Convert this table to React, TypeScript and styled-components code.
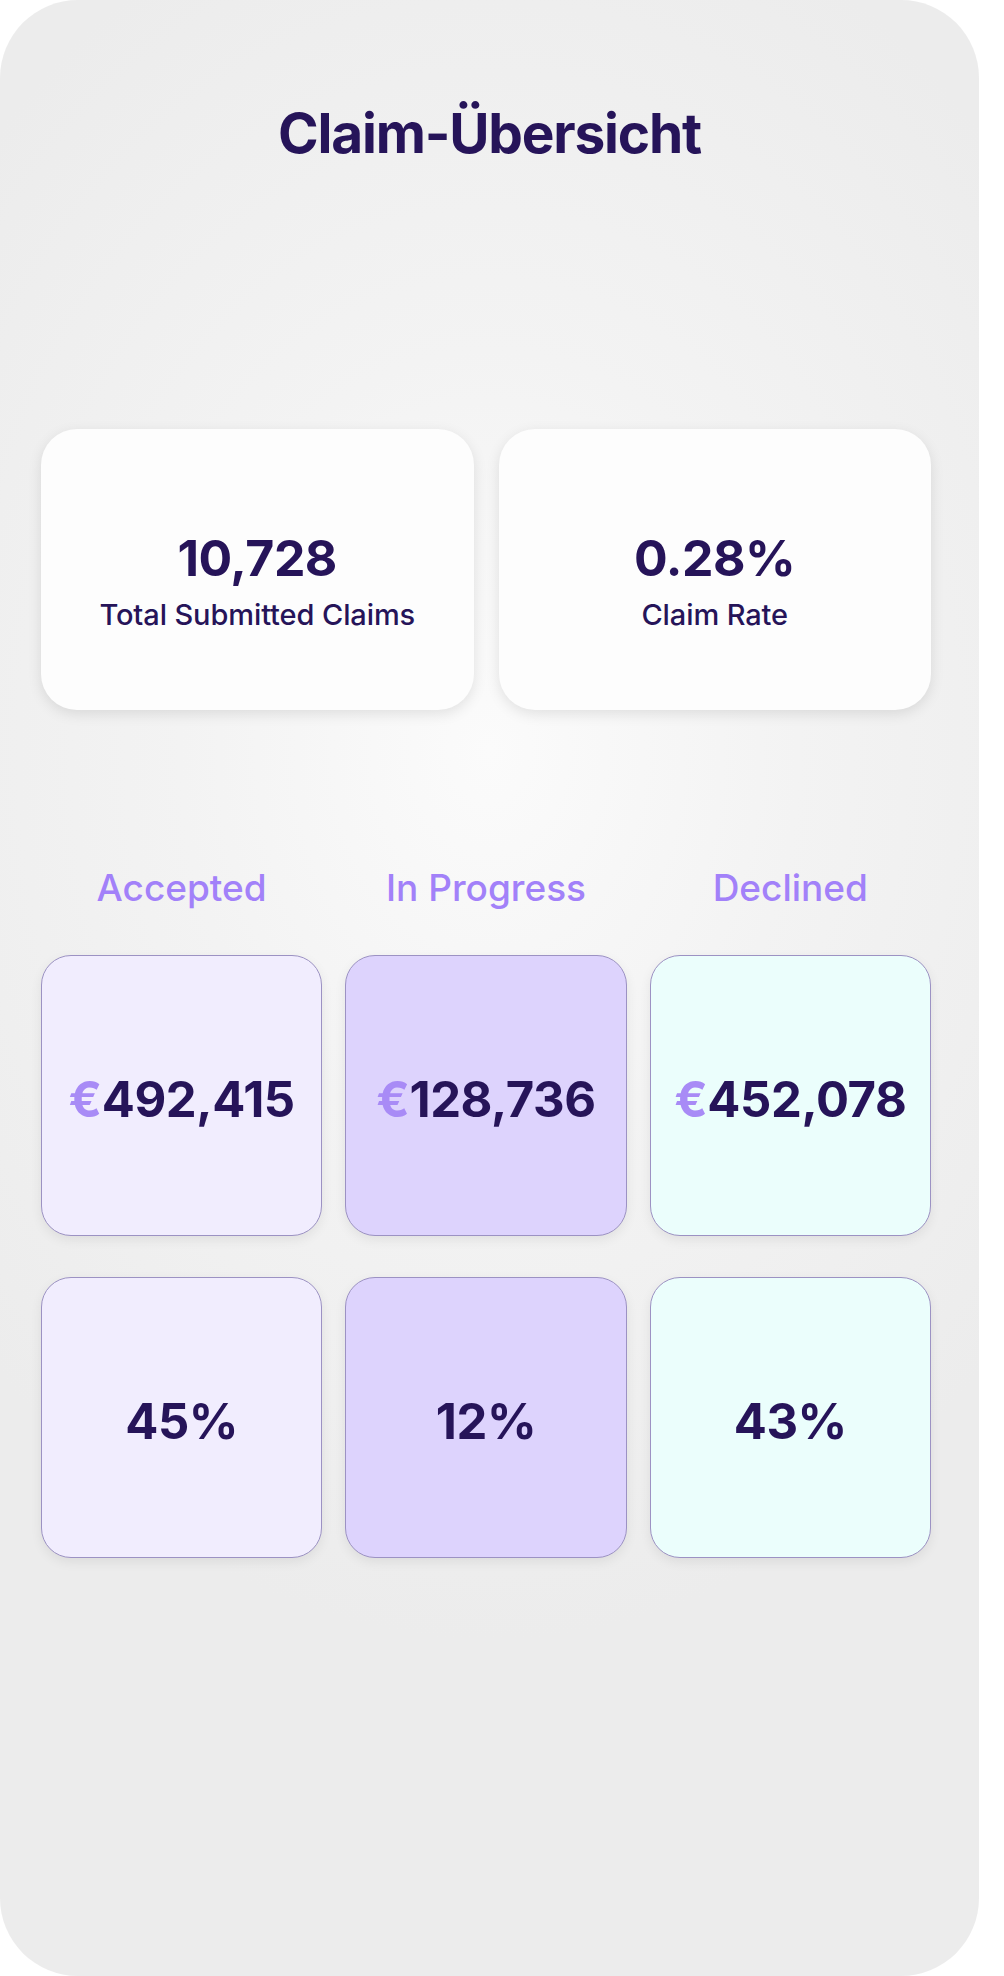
import styled, { createGlobalStyle } from 'styled-components';

const GlobalStyle = createGlobalStyle`
  html, body {
    margin: 0;
    padding: 0;
    background: #ffffff;
  }
  body {
    font-family: Inter, "Noto Sans", "Liberation Sans", sans-serif;
  }
`;

const Phone = styled.div`
  box-sizing: border-box;
  width: 979px;
  min-height: 1976px;
  border-radius: 78px;
  padding: 100px 48px 0 41px;
  background: radial-gradient(ellipse 70% 45% at 50% 38%, #fbfbfb 0%, #f3f3f3 45%, #ececec 100%);
  color: #261459;
`;

const Title = styled.h1`
  margin: 0 -7px 0 0;
  text-align: center;
  font-size: 55px;
  line-height: 66px;
  font-weight: 700;
  letter-spacing: -1.2px;
  color: #261459;
`;

const SummaryGrid = styled.div`
  display: grid;
  grid-template-columns: 1fr 1fr;
  gap: 25px;
  margin-top: 263px;
`;

const SummaryCard = styled.div`
  height: 281px;
  border-radius: 36px;
  background: #fdfdfd;
  box-shadow: 0 4px 14px rgba(0, 0, 0, 0.1);
  display: flex;
  flex-direction: column;
  align-items: center;
  justify-content: center;
  padding-top: 22px;
  box-sizing: border-box;
`;

const BigNumber = styled.div`
  font-size: 50px;
  line-height: 56px;
  font-weight: 700;
  letter-spacing: -0.5px;
`;

const SmallLabel = styled.div`
  margin-top: 12px;
  font-size: 29px;
  line-height: 34px;
  font-weight: 500;
  letter-spacing: -0.1px;
`;

const StatusRow = styled.div`
  display: grid;
  grid-template-columns: repeat(3, 1fr);
  gap: 23px;
  margin-top: 155px;
`;

const StatusLabel = styled.div`
  text-align: center;
  font-size: 37px;
  line-height: 46px;
  font-weight: 500;
  color: #a281f9;
`;

const StatGrid = styled.div`
  display: grid;
  grid-template-columns: repeat(3, 1fr);
  gap: 41px 23px;
  margin-top: 44px;
`;

const StatCard = styled.div<{ $tone: string }>`
  height: 281px;
  box-sizing: border-box;
  border-radius: 30px;
  border: 1px solid #9c92c3;
  background: ${(p) => p.$tone};
  box-shadow: 0 4px 12px rgba(0, 0, 0, 0.07);
  display: flex;
  align-items: center;
  justify-content: center;
  padding-top: 8px;
`;

const StatValue = styled.div`
  font-size: 49px;
  line-height: 56px;
  font-weight: 700;
  letter-spacing: -0.4px;
  color: #261459;
`;

const Euro = styled.span`
  color: #a88bf6;
`;

const columns = [
  { label: 'Accepted', amount: '492,415', share: '45%', tone: '#f1edfe' },
  { label: 'In Progress', amount: '128,736', share: '12%', tone: '#ddd3fd' },
  { label: 'Declined', amount: '452,078', share: '43%', tone: '#ebfefc' },
];

export default function App() {
  return (
    <>
      <GlobalStyle />
      <Phone>
        <Title>Claim-Übersicht</Title>

        <SummaryGrid>
          <SummaryCard>
            <BigNumber>10,728</BigNumber>
            <SmallLabel>Total Submitted Claims</SmallLabel>
          </SummaryCard>
          <SummaryCard>
            <BigNumber>0.28%</BigNumber>
            <SmallLabel>Claim Rate</SmallLabel>
          </SummaryCard>
        </SummaryGrid>

        <StatusRow>
          {columns.map((c) => (
            <StatusLabel key={c.label}>{c.label}</StatusLabel>
          ))}
        </StatusRow>

        <StatGrid>
          {columns.map((c) => (
            <StatCard key={c.label + '-amount'} $tone={c.tone}>
              <StatValue>
                <Euro>€</Euro>
                {c.amount}
              </StatValue>
            </StatCard>
          ))}
          {columns.map((c) => (
            <StatCard key={c.label + '-share'} $tone={c.tone}>
              <StatValue>{c.share}</StatValue>
            </StatCard>
          ))}
        </StatGrid>
      </Phone>
    </>
  );
}
